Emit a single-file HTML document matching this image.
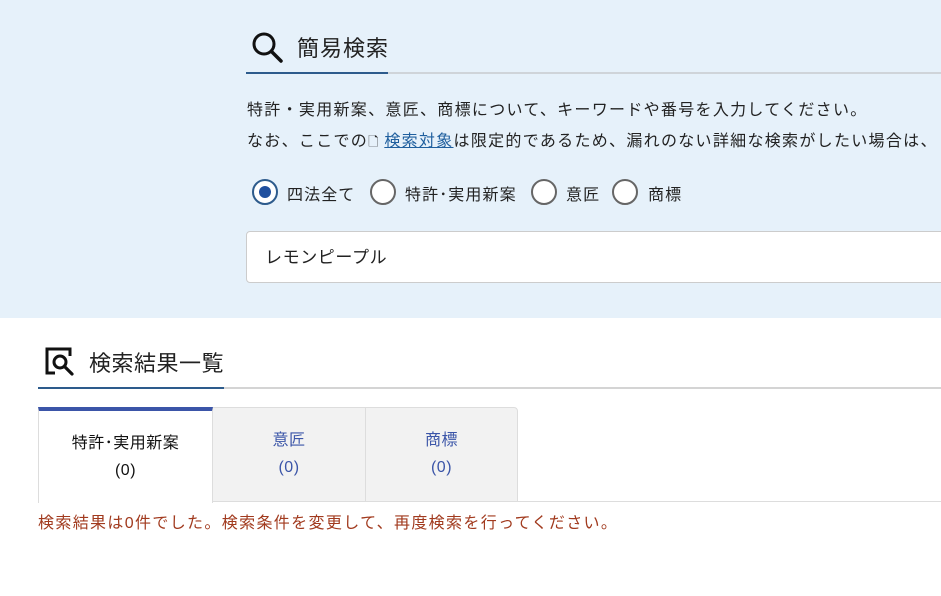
<!DOCTYPE html>
<html><head><meta charset="utf-8"><style>
*{margin:0;padding:0;box-sizing:border-box}
body{width:941px;height:596px;overflow:hidden;background:#fff;font-family:"Liberation Sans","Noto Sans CJK JP",sans-serif;color:#222;position:relative}
.top{position:absolute;left:0;top:0;width:941px;height:318px;background:#e6f1fa}
.abs{position:absolute;white-space:nowrap}
.r{font-size:16px;letter-spacing:1.1px}
</style></head><body>
<div class="top"></div>
<svg class="abs" style="left:250px;top:30px" width="36" height="36" viewBox="0 0 36 36"><circle cx="14" cy="14" r="10" fill="none" stroke="#111" stroke-width="3"/><line x1="21.5" y1="21.5" x2="31" y2="31" stroke="#111" stroke-width="3.5" stroke-linecap="round"/></svg>
<div class="abs" style="left:297px;top:31px;font-size:22px;letter-spacing:1px;color:#222">簡易検索</div>
<div class="abs" style="left:246px;top:72px;width:695px;height:2px;background:#cfd4d9"></div>
<div class="abs" style="left:246px;top:72px;width:142px;height:2px;background:#2d5b8c"></div>
<div class="abs" style="left:247px;top:96px;font-size:16px;letter-spacing:1.3px;color:#222">特許・実用新案、意匠、商標について、キーワードや番号を入力してください。</div>
<div class="abs" style="left:247px;top:127px;font-size:16px;letter-spacing:1.3px;color:#222">なお、ここでの<span style="font-size:13px;letter-spacing:0">🗋</span> <span style="color:#1f5f9e;text-decoration:underline">検索対象</span>は限定的であるため、漏れのない詳細な検索がしたい場合は、</div>
<div class="abs" style="left:252px;top:179px;width:26px;height:26px;border:2px solid #2d5b8c;border-radius:50%;background:#fff"><div style="position:absolute;left:5px;top:5px;width:12px;height:12px;border-radius:50%;background:#1f4f9e"></div></div>
<div class="abs r" style="left:287px;top:181px">四法全て</div>
<div class="abs" style="left:370px;top:179px;width:26px;height:26px;border:2px solid #666;border-radius:50%;background:#fff"></div>
<div class="abs r" style="left:405px;top:181px">特許･実用新案</div>
<div class="abs" style="left:531px;top:179px;width:26px;height:26px;border:2px solid #666;border-radius:50%;background:#fff"></div>
<div class="abs r" style="left:566px;top:181px">意匠</div>
<div class="abs" style="left:612px;top:179px;width:26px;height:26px;border:2px solid #666;border-radius:50%;background:#fff"></div>
<div class="abs r" style="left:648px;top:181px">商標</div>
<div class="abs" style="left:246px;top:231px;width:710px;height:52px;background:#fff;border:1px solid #ccc;border-radius:4px"></div>
<div class="abs" style="left:265px;top:243px;font-size:17px;letter-spacing:0.6px">レモンピープル</div>
<svg class="abs" style="left:44px;top:346px" width="32" height="32" viewBox="0 0 32 32"><path d="M9 3H3V27H11M9 3H26V10" fill="none" stroke="#111" stroke-width="3"/><circle cx="16" cy="16" r="6" fill="none" stroke="#111" stroke-width="3"/><line x1="20.5" y1="20.5" x2="28" y2="28" stroke="#111" stroke-width="3.2" stroke-linecap="round"/></svg>
<div class="abs" style="left:89px;top:346px;font-size:22px;letter-spacing:0.5px">検索結果一覧</div>
<div class="abs" style="left:38px;top:387px;width:903px;height:2px;background:#d4d4d4"></div>
<div class="abs" style="left:38px;top:387px;width:186px;height:2px;background:#2d5b8c"></div>
<div class="abs" style="left:38px;top:407px;width:480px;height:95px;border:1px solid #ddd;border-radius:4px 4px 0 0;background:#f2f2f2"></div>
<div class="abs" style="left:38px;top:407px;width:175px;height:96px;background:#fff;border-left:1px solid #ddd;border-right:1px solid #ddd;border-top:4px solid #3b55a8"></div>
<div class="abs" style="left:365px;top:408px;width:1px;height:94px;background:#ddd"></div>
<div class="abs" style="left:213px;top:501px;width:728px;height:1px;background:#ddd"></div>
<div class="abs" style="left:38px;top:430px;width:175px;text-align:center;font-size:16px;letter-spacing:0.5px;line-height:27px;color:#111">特許･実用新案<br>(0)</div>
<div class="abs" style="left:213px;top:427px;width:152px;text-align:center;font-size:16px;letter-spacing:0.5px;line-height:27px;color:#3b55a8">意匠<br>(0)</div>
<div class="abs" style="left:365px;top:427px;width:153px;text-align:center;font-size:16px;letter-spacing:0.5px;line-height:27px;color:#3b55a8">商標<br>(0)</div>
<div class="abs" style="left:38px;top:509px;font-size:16px;letter-spacing:1.35px;color:#a13a1e">検索結果は0件でした。検索条件を変更して、再度検索を行ってください。</div>
</body></html>
